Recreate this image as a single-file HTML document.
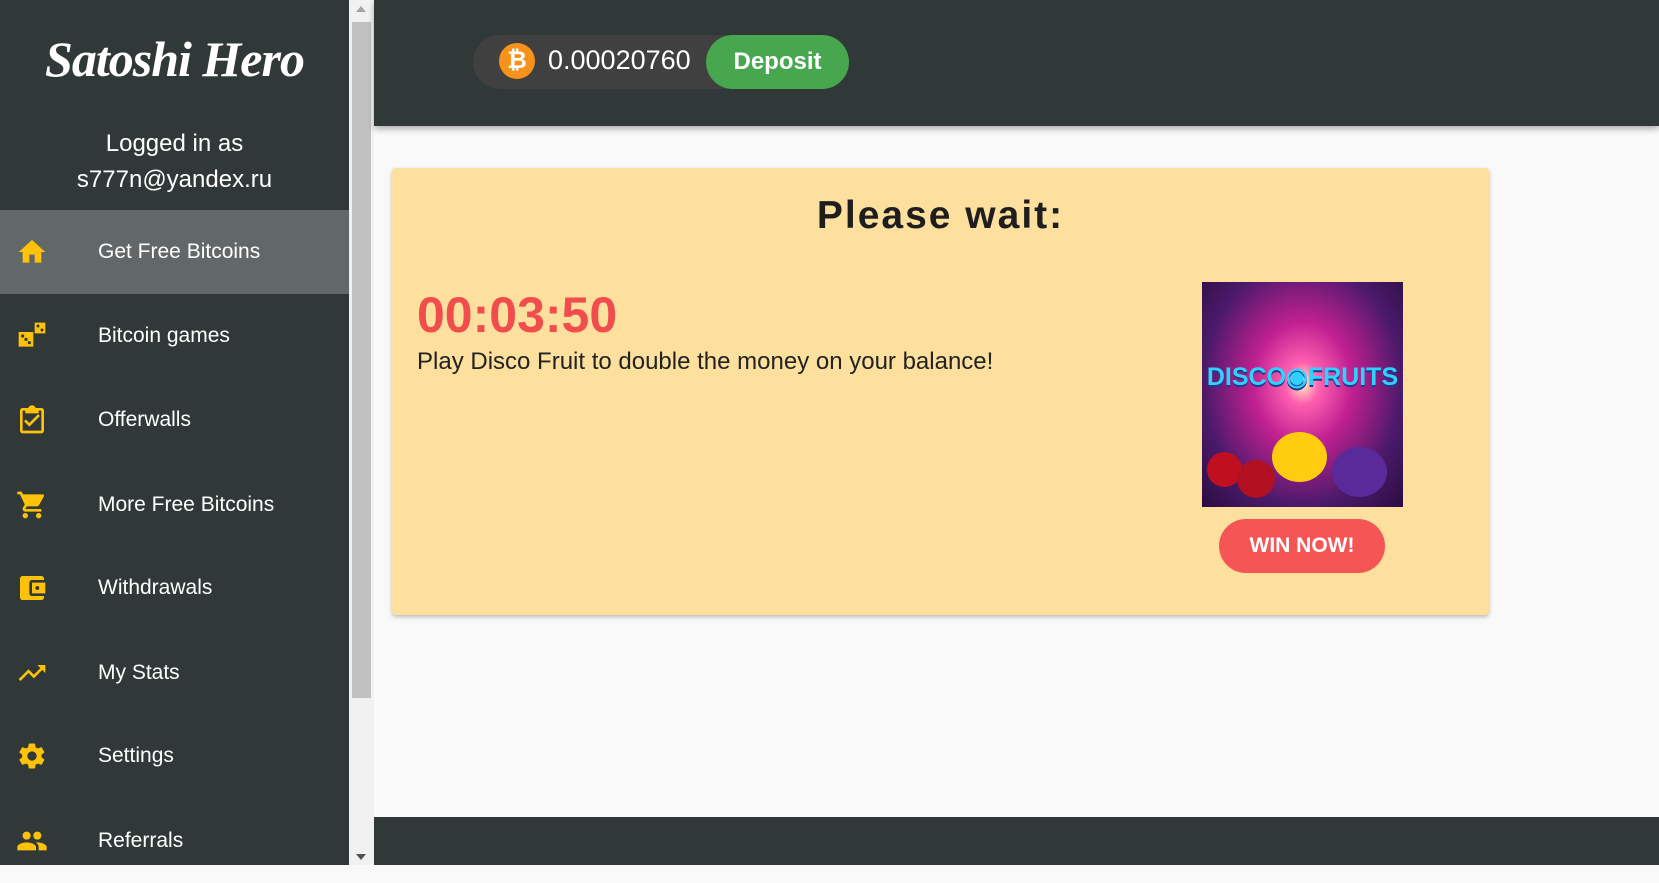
<!DOCTYPE html>
<html><head><meta charset="utf-8"><style>
*{margin:0;padding:0;box-sizing:border-box}
body{width:1659px;height:865px;overflow:hidden;background:#f9f9f9;font-family:"Liberation Sans",Arial,sans-serif;position:relative}
.side{position:absolute;left:0;top:0;width:349px;height:865px;background:#313838;color:#fff}
.logo{position:absolute;left:0;width:349px;top:30px;text-align:center;font-family:"Liberation Serif",serif;font-style:italic;font-weight:bold;font-size:50px;letter-spacing:-1px}
.who{position:absolute;left:0;width:349px;top:126px;text-align:center;font-size:24px;line-height:36px}
.item{position:absolute;left:0;width:349px;height:84px;display:flex;align-items:center}
.item.act{background:#626868}
.item svg{position:absolute;left:16px;width:32px;height:32px;fill:#fdc209}
.item span{position:absolute;left:98px;font-size:21px}
.sb{position:absolute;left:349px;top:0;width:25px;height:865px;background:#f1f1f1}
.thumb{position:absolute;left:352px;top:22px;width:19px;height:676px;background:#c1c1c1}
.hdr{position:absolute;left:374px;top:0;width:1285px;height:126px;background:#313838;box-shadow:0 3px 6px rgba(0,0,0,.3)}
.pill{position:absolute;left:473px;top:35px;width:376px;height:54px;border-radius:27px;background:#404040}
.btc{position:absolute;left:499px;top:43px;width:36px;height:36px;border-radius:50%;background:#f7931a;color:#fff;font-weight:bold;font-size:24px;text-align:center;line-height:36px}
.amt{position:absolute;left:548px;top:45px;color:#fff;font-size:27px}
.dep{position:absolute;left:706px;top:35px;width:143px;height:54px;border-radius:27px;background:#46a74e;color:#fff;font-weight:bold;font-size:24px;text-align:center;line-height:54px}
.foot{position:absolute;left:374px;top:817px;width:1285px;height:48px;background:#313838}
.card{position:absolute;left:392px;top:168px;width:1097px;height:447px;background:#fddf9e;border-radius:4px;box-shadow:0 2px 4px rgba(0,0,0,.25)}
.pw{position:absolute;left:0;width:100%;top:26px;text-align:center;font-size:39px;font-weight:900;color:#1e1e1e;letter-spacing:2px}
.tm{position:absolute;left:25px;top:118px;font-size:50px;font-weight:bold;color:#f24d4d}
.tx{position:absolute;left:25px;top:180px;font-size:24px;color:#222}
.img{position:absolute;left:810px;top:114px;width:201px;height:225px;background:radial-gradient(ellipse at 50% 45%,#fff3c0 0,#ff5fb0 12%,#c02090 35%,#4a1a6a 70%,#2a0d40 100%);overflow:hidden}
.img .t{position:absolute;top:80px;left:0;width:100%;text-align:center;font-weight:900;font-size:25px;color:#30d0ff;letter-spacing:0;text-shadow:0 2px 0 #1a3a90;white-space:nowrap}
.win{position:absolute;left:827px;top:351px;width:166px;height:54px;border-radius:27px;background:#f65555;color:#fff;font-weight:900;font-size:21px;text-align:center;line-height:54px}
</style></head><body>
<div class="side">
<div class="logo">Satoshi Hero</div>
<div class="who">Logged in as<br>s777n@yandex.ru</div>
<div class="item act" style="top:210px"><svg viewBox="0 0 24 24"><path d="M10 20v-6h4v6h5v-8h3L12 3 2 12h3v8z"/></svg><span>Get Free Bitcoins</span></div>
<div class="item" style="top:294px"><svg viewBox="0 0 24 24"><path d="M2 9h11v11H2zM14 2h8v8h-8z"/><circle cx="5" cy="12" r="1.2" fill="#313838"/><circle cx="7.5" cy="14.5" r="1.2" fill="#313838"/><circle cx="10" cy="17" r="1.2" fill="#313838"/><circle cx="16.5" cy="4.5" r="1.1" fill="#313838"/><circle cx="19.5" cy="7.5" r="1.1" fill="#313838"/></svg><span>Bitcoin games</span></div>
<div class="item" style="top:378px"><svg viewBox="0 0 24 24"><path d="M19 3h-4.2C14.4 1.8 13.3 1 12 1s-2.4.8-2.8 2H5c-1.1 0-2 .9-2 2v15c0 1.1.9 2 2 2h14c1.1 0 2-.9 2-2V5c0-1.1-.9-2-2-2zm0 17H5V5h2v2h10V5h2zm-9-3l-4-4 1.4-1.4 2.6 2.6 6.6-6.6L18 9z"/></svg><span>Offerwalls</span></div>
<div class="item" style="top:463px"><svg viewBox="0 0 24 24"><path d="M7 18c-1.1 0-2 .9-2 2s.9 2 2 2 2-.9 2-2-.9-2-2-2zM1 2v2h2l3.6 7.6-1.4 2.4c-.7 1.3.3 3 1.8 3h12v-2H7l1.1-2h7.5c.8 0 1.4-.4 1.700-1l3.6-6.5c.4-.7-.1-1.5-.9-1.5H5.2l-.9-2zm16 16c-1.1 0-2 .9-2 2s.9 2 2 2 2-.9 2-2-.9-2-2-2z"/></svg><span>More Free Bitcoins</span></div>
<div class="item" style="top:546px"><svg viewBox="0 0 24 24"><path d="M21 18v1c0 1.1-.9 2-2 2H5c-1.1 0-2-.9-2-2V5c0-1.1.9-2 2-2h14c1.1 0 2 .9 2 2v1h-9c-1.1 0-2 .9-2 2v8c0 1.1.9 2 2 2zm-9-2h10V8H12zm4-2.5c-.8 0-1.5-.7-1.5-1.5s.7-1.5 1.5-1.5 1.5.7 1.5 1.5-.7 1.5-1.5 1.5z"/></svg><span>Withdrawals</span></div>
<div class="item" style="top:631px"><svg viewBox="0 0 24 24"><path d="M16 6l2.3 2.3-4.9 4.9-4-4L2 16.6 3.4 18l6-6 4 4 6.3-6.3L22 12V6z"/></svg><span>My Stats</span></div>
<div class="item" style="top:714px"><svg viewBox="0 0 24 24"><path d="M19.1 12.9c0-.3.1-.6.1-.9s0-.6-.1-.9l2-1.6c.2-.1.2-.4.1-.6l-1.9-3.3c-.1-.2-.4-.3-.6-.2l-2.4 1c-.5-.4-1-.7-1.6-.9l-.4-2.5c0-.3-.2-.4-.5-.4h-3.8c-.2 0-.4.2-.5.4l-.4 2.5c-.6.2-1.100.6-1.600.9l-2.4-1c-.2-.1-.5 0-.6.2L2.6 8.9c-.1.2-.1.5.1.6l2 1.6c0 .3-.1.6-.1.9s0 .6.1.9l-2 1.6c-.2.1-.2.4-.1.6l1.9 3.3c.1.2.4.3.6.2l2.4-1c.5.4 1 .7 1.6.9l.4 2.5c0 .2.2.4.5.4h3.8c.2 0 .4-.2.5-.4l.4-2.5c.6-.2 1.1-.6 1.6-.9l2.4 1c.2.1.5 0 .6-.2l1.9-3.3c.1-.2.1-.5-.1-.6zM12 15.5c-1.9 0-3.5-1.6-3.5-3.5s1.6-3.5 3.5-3.5 3.5 1.6 3.5 3.5-1.6 3.5-3.5 3.5z"/></svg><span>Settings</span></div>
<div class="item" style="top:799px"><svg viewBox="0 0 24 24"><path d="M16 11c1.7 0 3-1.3 3-3s-1.3-3-3-3-3 1.3-3 3 1.3 3 3 3zm-8 0c1.7 0 3-1.3 3-3S9.7 5 8 5 5 6.3 5 8s1.3 3 3 3zm0 2c-2.3 0-7 1.2-7 3.5V19h14v-2.5c0-2.3-4.7-3.5-7-3.5zm8 0c-.3 0-.6 0-1 .1 1.2.8 2 2 2 3.4V19h6v-2.5c0-2.3-4.7-3.5-7-3.5z"/></svg><span>Referrals</span></div>
</div>
<div class="sb"></div><div class="thumb"></div>
<div style="position:absolute;left:356px;top:6px;border:5px solid transparent;border-bottom:6px solid #a3a3a3;border-top:0"></div>
<div style="position:absolute;left:356px;top:854px;border:5px solid transparent;border-top:6px solid #505050;border-bottom:0"></div>
<div class="hdr"></div>
<div class="pill"></div>
<div class="btc">₿</div>
<div class="amt">0.00020760</div>
<div class="dep">Deposit</div>
<div class="card">
<div class="pw">Please wait:</div>
<div class="tm">00:03:50</div>
<div class="tx">Play Disco Fruit to double the money on your balance!</div>
<div class="img"><div class="t">DISCO◉FRUITS</div>
<div style="position:absolute;left:70px;top:150px;width:55px;height:50px;border-radius:50%;background:#ffcc10"></div>
<div style="position:absolute;left:5px;top:170px;width:35px;height:35px;border-radius:50%;background:#c01020"></div>
<div style="position:absolute;left:35px;top:178px;width:38px;height:38px;border-radius:50%;background:#b01020"></div>
<div style="position:absolute;left:130px;top:165px;width:55px;height:50px;border-radius:50%;background:#5a2a9a"></div>
</div>
<div class="win">WIN NOW!</div>
</div>
<div class="foot"></div>
</body></html>
